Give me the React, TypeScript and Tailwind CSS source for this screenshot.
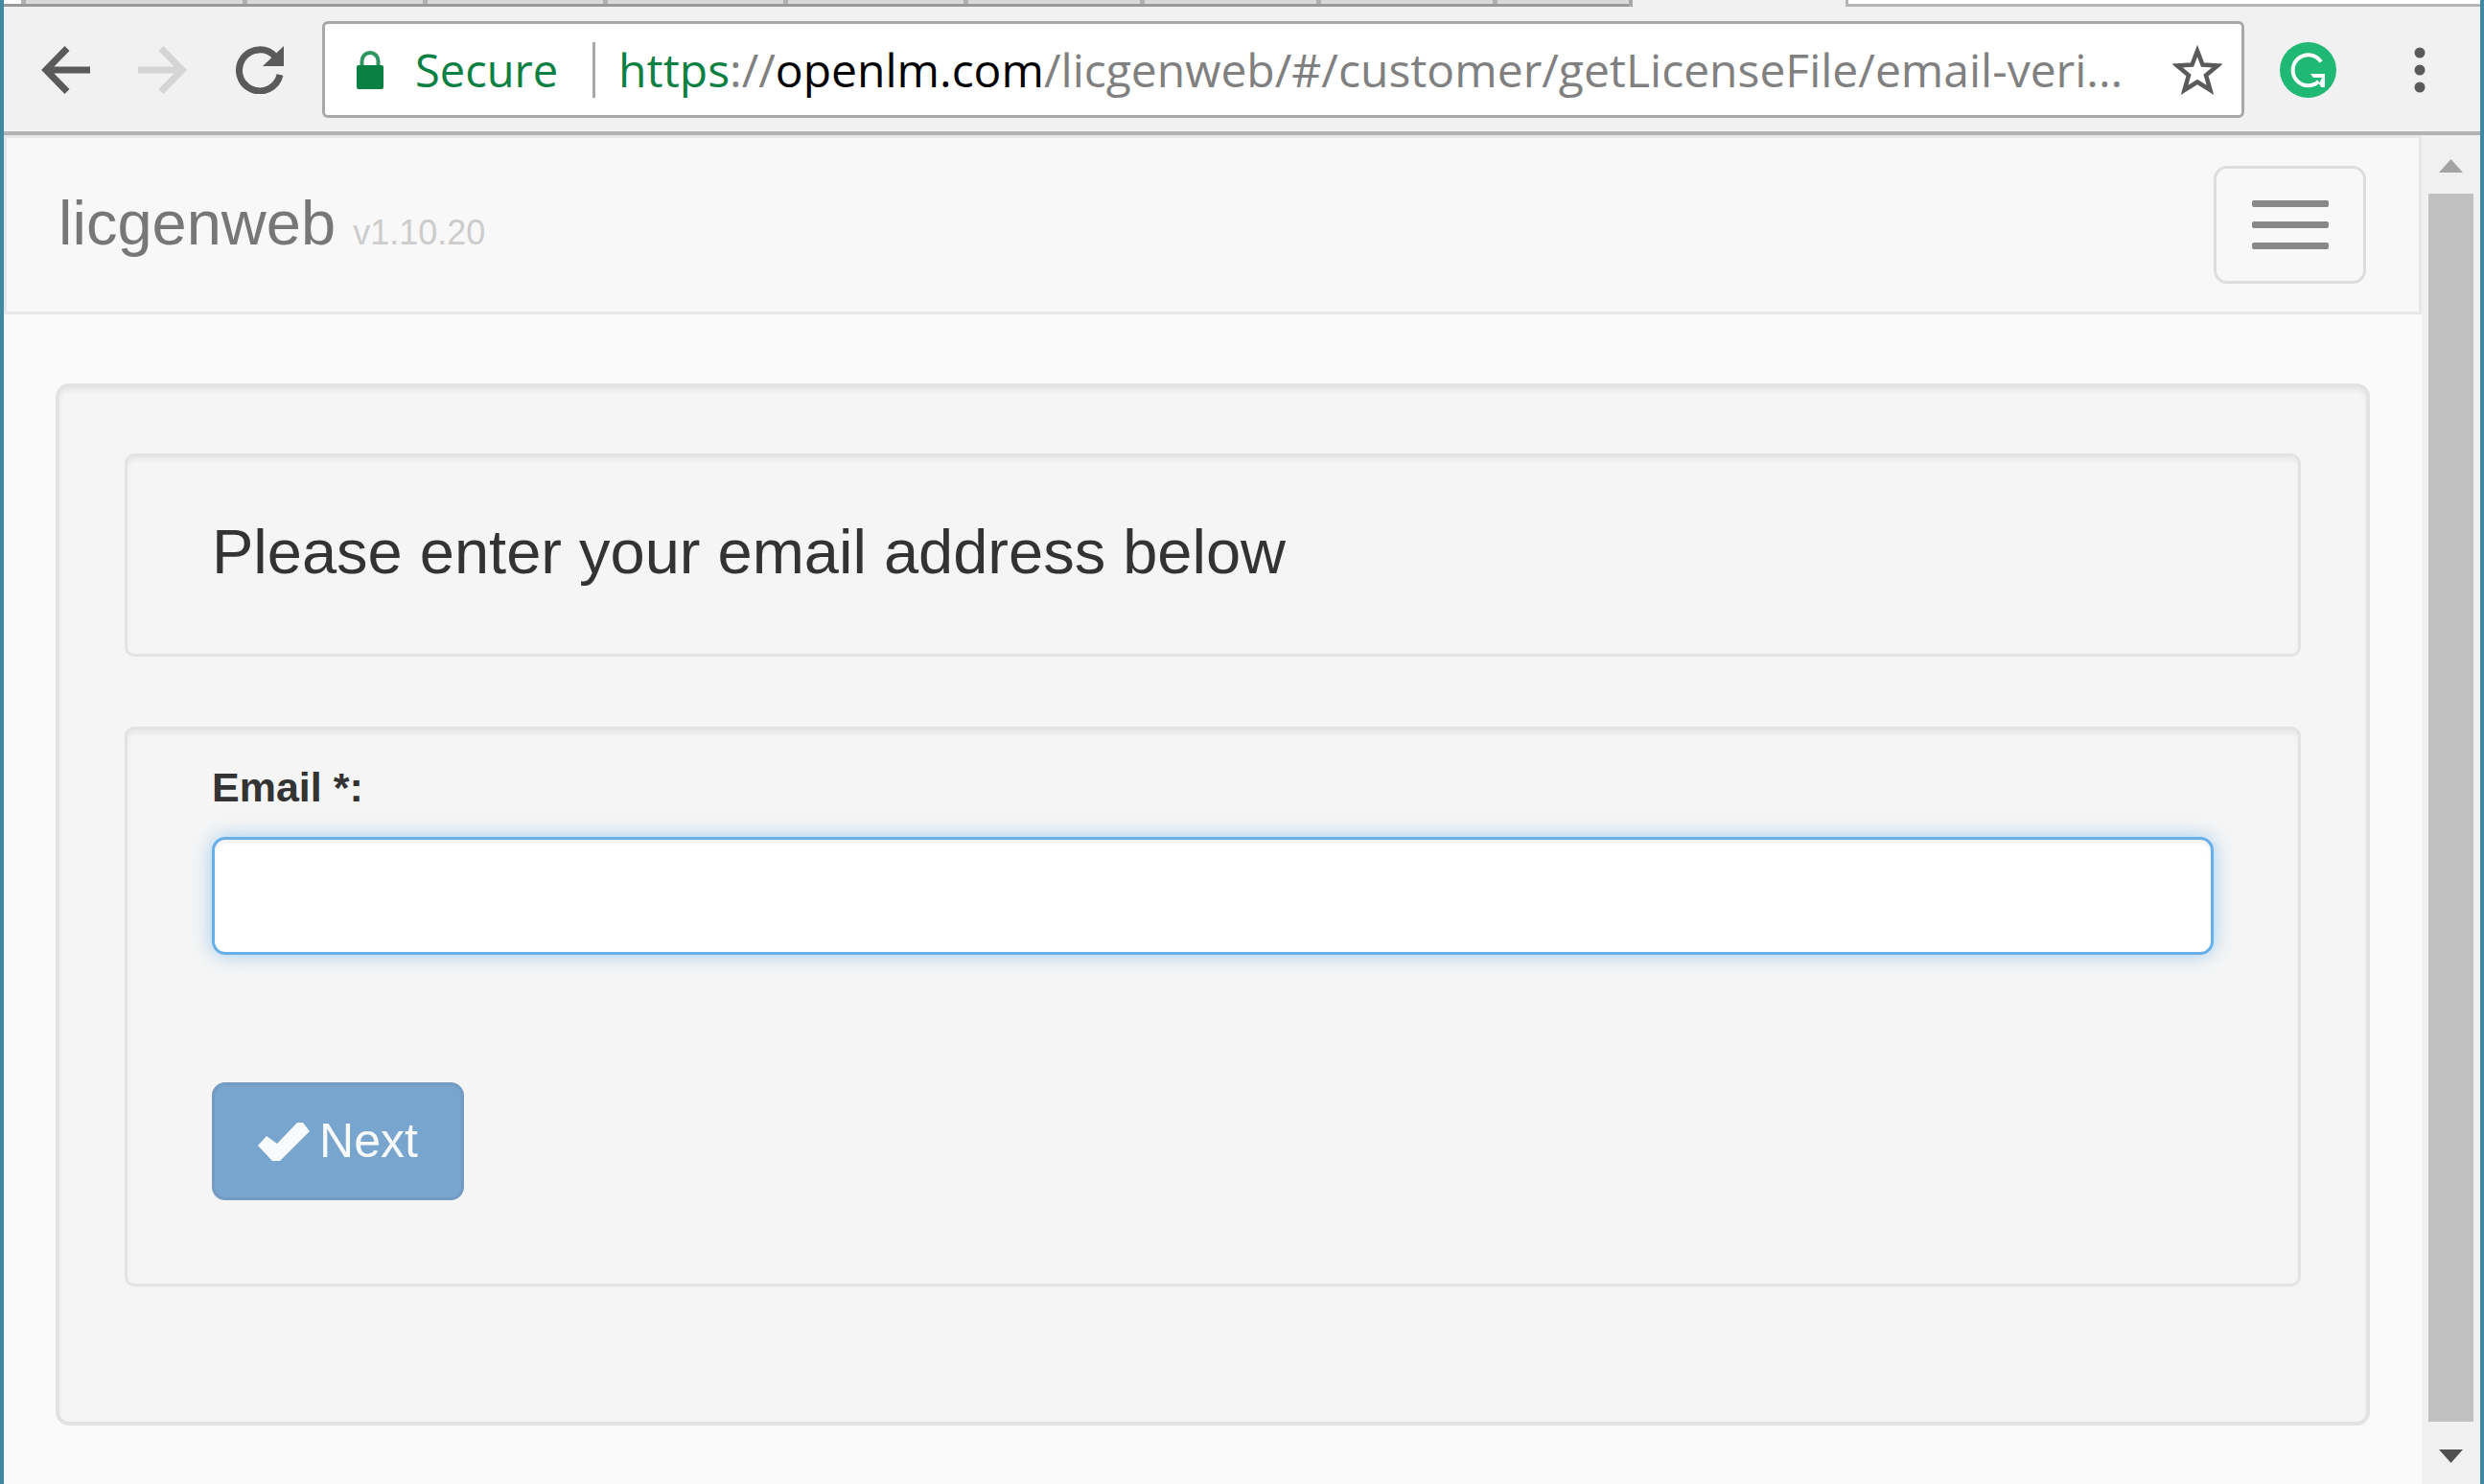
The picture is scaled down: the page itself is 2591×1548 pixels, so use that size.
import { useState } from "react";

const tabs = [
  "w-[231px]",
  "w-[188px]",
  "w-[188px]",
  "w-[188px]",
  "w-[188px]",
  "w-[184px]",
  "w-[184px]",
  "w-[184px]",
  "w-[142px]",
];

function TabStrip() {
  return (
    <div className="flex h-[7px]">
      <div className="w-[18px] border-b-[3px] border-[#999999] bg-white" />
      {tabs.map((width, i) => (
        <div key={i} className={`${width} shrink-0 border-b-[3px] border-[#999999] bg-[#d9d9d9]`}>
          <div className="h-1 w-[5px] bg-[#b0b0b0]" />
        </div>
      ))}
      <div className="w-1 bg-[#a8a8a8]" />
      <div className="w-[222px]" />
      <div className="flex-1 border-b-[3px] border-l-[3px] border-[#b4b4b4] bg-white" />
    </div>
  );
}

function BackIcon() {
  return (
    <svg className="h-[50px] w-[51px]" viewBox="0 0 51 50" fill="none" stroke="currentColor" strokeWidth="7">
      <path d="M51 25H6M27 2.5L5 25L27 47.5" />
    </svg>
  );
}

function ReloadIcon() {
  return (
    <svg className="h-[50px] w-[51px]" viewBox="0 0 51 50">
      <path d="M47 30A21.500 21.500 0 1 1 42 11" fill="none" stroke="#5a5a5a" strokeWidth="7" />
      <path d="M51 0V21H29Z" fill="#5a5a5a" />
    </svg>
  );
}

function Toolbar() {
  return (
    <div className="flex h-[134px] items-start border-b-4 border-[#b4b3b4] pl-[39px] pt-[15px]">
      <div className="flex h-[101px] shrink-0 items-center gap-[50px]">
        <button aria-label="Back" className="text-[#5a5a5a]">
          <BackIcon />
        </button>
        <button aria-label="Forward" className="rotate-180 text-[#d5d5d5]" disabled>
          <BackIcon />
        </button>
        <button aria-label="Reload">
          <ReloadIcon />
        </button>
      </div>

      {/* Address bar */}
      <div className="ml-10 flex h-[101px] min-w-0 flex-1 items-center rounded-md border-[3px] border-[#a8a8a8] bg-white pl-[33px] pr-5 font-['Open_Sans',sans-serif] leading-[60px]">
        <svg className="h-10 w-7 shrink-0" viewBox="0 0 28 40">
          <path d="M5.500 18V10.500a8.500 8.500 0 0 1 17 0V18" fill="none" stroke="#2f9560" strokeWidth="4" />
          <rect y="15" width="28" height="25" rx="2" fill="#0b8043" />
        </svg>
        <span className="ml-[33px] text-[47px] text-[#0b8043]">Secure</span>
        <div className="ml-9 h-[58px] w-[3px] shrink-0 bg-[#a8a8a8]" />
        <div className="ml-6 min-w-0 flex-1 whitespace-nowrap text-[48px] text-[#808080]">
          <span className="text-[#0b8043]">https</span>://<span className="text-black">openlm.com</span>
          /licgenweb/#/customer/getLicenseFile/email-veri...
        </div>
        <button aria-label="Bookmark this page" className="shrink-0">
          <svg className="h-[54px] w-[52px]" viewBox="0 0 52 54" fill="none" stroke="#5a5a5a" strokeWidth="4.500">
            <path d="M26 7L31.500 21.500L47 22.500L35 32.500L39.500 48L26 39.500L12.500 48L17 32.500L5 22.500L20.500 21.500Z" />
          </svg>
        </button>
      </div>

      <div className="flex h-[101px] shrink-0 items-center">
        <button aria-label="Grammarly" className="ml-[37px]">
          <svg className="h-[58px] w-[59px]" viewBox="0 0 59 58">
            <ellipse cx="29.500" cy="29" rx="29.500" ry="29" fill="#1fb874" />
            <path d="M43 20.500A16 16 0 1 0 40.500 41" fill="none" stroke="#fff" strokeWidth="4" />
            <path d="M32 33H47V47H43L41 43L44 37H35Z" fill="#fff" />
          </svg>
        </button>
        <button aria-label="Menu" className="ml-[81px] mr-[57px]">
          <svg className="h-12 w-3" viewBox="0 0 12 48" fill="#5a5a5a">
            <circle cx="6" cy="6" r="5.500" />
            <circle cx="6" cy="24" r="5.500" />
            <circle cx="6" cy="42" r="5.500" />
          </svg>
        </button>
      </div>
    </div>
  );
}

function Scrollbar() {
  return (
    <div className="flex w-[61px] shrink-0 flex-col items-center bg-[#f0f0f0]">
      <svg className="mt-[25px] h-[14px] w-[25px] shrink-0" viewBox="0 0 25 14" fill="#a3a3a3">
        <path d="M12.500 0L25 14H0Z" />
      </svg>
      <div className="mt-[22px] w-[47px] flex-1 bg-[#c0c0c0]" />
      <svg className="mb-[22px] mt-[29px] h-[14px] w-[25px] shrink-0" viewBox="0 0 25 14" fill="#505050">
        <path d="M0 0H25L12.500 14Z" />
      </svg>
    </div>
  );
}

function Navbar() {
  return (
    <nav className="flex h-[187px] items-center justify-between border-[3px] border-[#e7e7e7] bg-[#f8f8f8] pl-[54px] pr-[55px]">
      <a href="#" className="pt-[6px] text-[65px] leading-[72px] text-[#777777]">
        licgenweb <small className="text-[36px] text-[#cccccc]">v1.10.20</small>
      </a>
      <button
        aria-label="Toggle navigation"
        className="flex h-[123px] w-[159px] flex-col items-center justify-center gap-[15px] rounded-[14px] border-[3px] border-[#dddddd]"
      >
        <span className="h-[7px] w-20 rounded-[2px] bg-[#888888]" />
        <span className="h-[7px] w-20 rounded-[2px] bg-[#888888]" />
        <span className="h-[7px] w-20 rounded-[2px] bg-[#888888]" />
      </button>
    </nav>
  );
}

export default function App() {
  const [email, setEmail] = useState("");

  return (
    <div className="flex h-screen flex-col overflow-hidden border-x-4 border-[#4188a2] bg-[#f1f1f1] font-['Liberation_Sans',Arial,sans-serif]">
      <TabStrip />
      <Toolbar />
      <div className="flex min-h-0 flex-1">
        <div className="flex-1 bg-[#fafafa] text-[#333333]">
          <Navbar />
          <main className="mx-[54px] mt-[72px] rounded-[14px] border-4 border-[#e3e3e3] bg-[#f5f5f5] px-[68px] pb-[141px] pt-[69px] shadow-[inset_0_4px_4px_rgba(0,0,0,0.05)]">
            <div className="rounded-[10px] border-[3px] border-[#e3e3e3] px-[88px] pb-[70px] pt-16 shadow-[inset_0_4px_4px_rgba(0,0,0,0.05)]">
              <h1 className="text-[65px] leading-[72px]">Please enter your email address below</h1>
            </div>

            <form
              className="mt-[73px] rounded-[10px] border-[3px] border-[#e3e3e3] px-[88px] pb-[87px] pt-[30px] shadow-[inset_0_4px_4px_rgba(0,0,0,0.05)]"
              onSubmit={(e) => e.preventDefault()}
            >
              <label htmlFor="email" className="block text-[43px] font-bold leading-[60px]">
                Email *:
              </label>
              <input
                id="email"
                type="email"
                value={email}
                onChange={(e) => setEmail(e.target.value)}
                className="mt-[22px] block h-[123px] w-full rounded-[14px] border-[3px] border-[#66afe9] bg-white px-10 text-[50px] shadow-[inset_0_4px_4px_rgba(0,0,0,0.05),0_0_20px_rgba(102,175,233,0.6)] outline-none"
              />
              <button
                type="submit"
                className="mt-[133px] flex h-[123px] w-[263px] items-center justify-center gap-[10px] rounded-[14px] border-[3px] border-[#749bc2] bg-[#78a5cd] text-[50px] text-[#f8fafc]"
              >
                <svg className="h-10 w-[54px]" viewBox="0 0 54 40" fill="currentColor">
                  <path d="M0 24L9 14L20 22L41 0H47L54 9L23 40H15Z" />
                </svg>
                Next
              </button>
            </form>
          </main>
        </div>
        <Scrollbar />
      </div>
    </div>
  );
}
